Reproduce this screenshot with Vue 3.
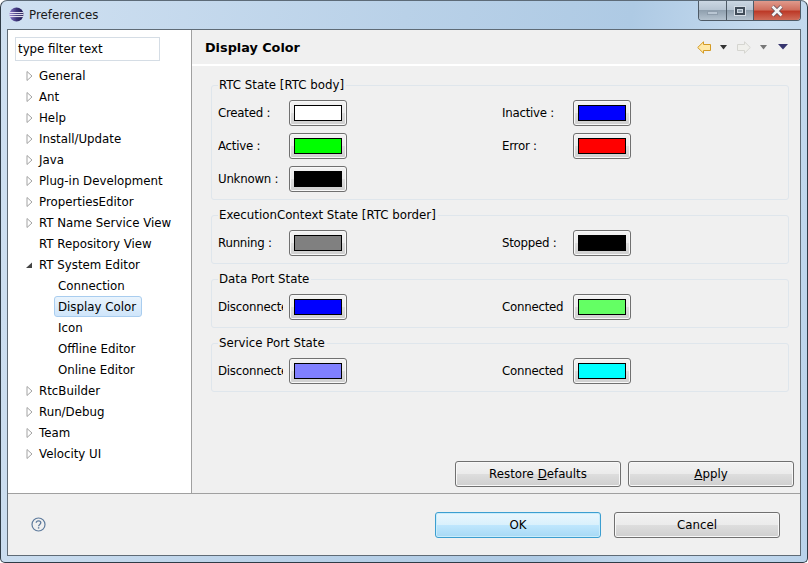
<template>
  <div class="window">
    <div class="titlebar">
      <div class="title-left">
        <svg class="logo" width="15" height="15" viewBox="0 0 15 15">
          <defs>
            <linearGradient id="eclipse" x1="0" y1="0" x2="1" y2="0">
              <stop offset="0" stop-color="#8a78c8" />
              <stop offset="0.5" stop-color="#3c3478" />
              <stop offset="1" stop-color="#1e1a50" />
            </linearGradient>
          </defs>
          <circle cx="7.5" cy="7.5" r="7" fill="url(#eclipse)" />
          <path d="M0.6 5.6h13.8M0.4 7.6h14.2M0.6 9.6h13.8" stroke="#f1eef8" stroke-width="1" />
        </svg>
        <span class="title-text">Preferences</span>
      </div>
      <div class="win-controls">
        <div class="ctl ctl-min"><span class="min-glyph"></span></div>
        <div class="ctl ctl-max"><span class="max-glyph"></span></div>
        <div class="ctl ctl-close">
          <svg width="14" height="12" viewBox="0 0 14 12">
            <path d="M2.5 1.5l9 9M11.5 1.5l-9 9" stroke="#5b4a55" stroke-width="4" fill="none" />
            <path d="M2.5 1.5l9 9M11.5 1.5l-9 9" stroke="#f4f4f4" stroke-width="2.6" fill="none" />
          </svg>
        </div>
      </div>
    </div>

    <div class="client">
      <div class="main">
        <aside class="sidebar">
          <div class="filter">type filter text</div>
          <ul class="tree">
            <li v-for="item in tree" :key="item.label" class="tree-row" :class="{ child: item.child }">
              <svg v-if="item.arrow === 'closed'" class="twisty" width="7" height="10" viewBox="0 0 7 10">
                <path d="M1 0.5L6 5L1 9.5Z" fill="#fff" stroke="#a3a3a3" />
              </svg>
              <svg v-else-if="item.arrow === 'open'" class="twisty" width="7" height="10" viewBox="0 0 7 10">
                <path d="M0 8L6 2.5V8Z" fill="#444" />
              </svg>
              <span v-else class="twisty-gap"></span>
              <span class="tree-label" :class="{ selected: item.selected }">{{ item.label }}</span>
            </li>
          </ul>
        </aside>

        <section class="content">
          <header class="page-head">
            <h1>Display Color</h1>
            <div class="nav-icons">
              <svg width="14" height="13" viewBox="0 0 14 13">
                <path d="M0.7 6.5L6.5 0.8V3.5H13.5V9.5H6.5V12.2Z" fill="#ffe9a8" stroke="#d49a24" />
              </svg>
              <svg class="drop" width="7" height="5" viewBox="0 0 7 5"><path d="M0 0H7L3.5 4.5Z" fill="#333" /></svg>
              <svg class="fwd" width="14" height="13" viewBox="0 0 14 13">
                <path d="M13.3 6.5L7.5 0.8V3.5H0.5V9.5H7.5V12.2Z" fill="#f0f0ec" stroke="#d5d5d0" />
              </svg>
              <svg class="drop" width="7" height="5" viewBox="0 0 7 5"><path d="M0 0H7L3.5 4.5Z" fill="#777" /></svg>
              <svg class="menu" width="10" height="6" viewBox="0 0 10 6"><path d="M0 0H10L5 5.5Z" fill="#36346e" /></svg>
            </div>
          </header>

          <div class="page-body">
            <fieldset v-for="group in groups" :key="group.title" class="group">
              <legend>{{ group.title }}</legend>
              <div class="color-grid">
                <div v-for="c in group.colors" :key="c.label" class="color-item">
                  <span class="color-label">{{ c.label }}</span>
                  <button class="color-btn">
                    <span class="swatch" :style="{ background: c.color }"></span>
                  </button>
                </div>
              </div>
            </fieldset>

            <div class="page-actions">
              <button class="btn">Restore <u>D</u>efaults</button>
              <button class="btn"><u>A</u>pply</button>
            </div>
          </div>
        </section>
      </div>

      <footer class="footer">
        <svg class="help" width="15" height="15" viewBox="0 0 15 15">
          <circle cx="7.5" cy="7.5" r="6.5" fill="none" stroke="#5d7a9c" stroke-width="1.2" />
          <path d="M5.2 5.8C5.3 4.4 6.3 3.8 7.5 3.8C8.8 3.8 9.8 4.6 9.8 5.8C9.8 7.3 7.6 7.5 7.6 9.2" fill="none" stroke="#5d7a9c" stroke-width="1.3" />
          <rect x="6.9" y="10.2" width="1.4" height="1.4" fill="#5d7a9c" />
        </svg>
        <div class="footer-actions">
          <button class="btn btn-ok">OK</button>
          <button class="btn">Cancel</button>
        </div>
      </footer>
    </div>
  </div>
</template>

<script setup>
const names = ['General', 'Ant', 'Help', 'Install/Update', 'Java', 'Plug-in Development', 'PropertiesEditor', 'RT Name Service View']
const tree = [
  ...names.map((label) => ({ label, arrow: 'closed' })),
  { label: 'RT Repository View' },
  { label: 'RT System Editor', arrow: 'open' },
  { label: 'Connection', child: true },
  { label: 'Display Color', child: true, selected: true },
  { label: 'Icon', child: true },
  { label: 'Offline Editor', child: true },
  { label: 'Online Editor', child: true },
  { label: 'RtcBuilder', arrow: 'closed' },
  { label: 'Run/Debug', arrow: 'closed' },
  { label: 'Team', arrow: 'closed' },
  { label: 'Velocity UI', arrow: 'closed' }
]

const groups = [
  {
    title: 'RTC State [RTC body]',
    colors: [
      { label: 'Created :', color: '#ffffff' },
      { label: 'Inactive :', color: '#0000ff' },
      { label: 'Active :', color: '#00ff00' },
      { label: 'Error :', color: '#ff0000' },
      { label: 'Unknown :', color: '#000000' }
    ]
  },
  {
    title: 'ExecutionContext State [RTC border]',
    colors: [
      { label: 'Running :', color: '#808080' },
      { label: 'Stopped :', color: '#000000' }
    ]
  },
  {
    title: 'Data Port State',
    colors: [
      { label: 'Disconnected', color: '#0000ff' },
      { label: 'Connected', color: '#64ff64' }
    ]
  },
  {
    title: 'Service Port State',
    colors: [
      { label: 'Disconnected', color: '#8080ff' },
      { label: 'Connected', color: '#00ffff' }
    ]
  }
]
</script>

<style>
html, body {
  margin: 0;
  overflow: hidden;
}
</style>

<style scoped>
.window {
  width: 808px;
  height: 563px;
  box-sizing: border-box;
  display: flex;
  flex-direction: column;
  padding: 0 6px 6px 6px;
  border: 1px solid #2f3b46;
  border-top-color: #5d6b78;
  border-radius: 7px 7px 5px 5px;
  background: linear-gradient(100deg, #cfe0f1 0%, #b9d1e8 45%, #aecae4 70%, #c6dbef 85%, #b9d2ea 100%);
  font-family: "DejaVu Sans", sans-serif;
  font-size: 11.8px;
  color: #000;
}
.titlebar {
  height: 28px;
  flex: none;
  display: flex;
  justify-content: space-between;
  align-items: flex-start;
}
.title-left {
  display: flex;
  align-items: center;
  gap: 5px;
  height: 27px;
  padding-left: 2px;
}
.title-text {
  color: #1a1a1a;
}
.win-controls {
  display: flex;
  height: 19px;
  border: 1px solid #4e5a66;
  border-top: none;
  border-radius: 0 0 4px 4px;
  overflow: hidden;
}
.ctl {
  display: flex;
  align-items: center;
  justify-content: center;
  border-left: 1px solid #4e5a66;
  background: linear-gradient(#cbd7e3 0%, #b7c5d3 45%, #8f9fae 50%, #b4c2cf 100%);
}
.ctl-min {
  width: 27px;
  border-left: none;
}
.ctl-max {
  width: 26px;
}
.ctl-close {
  width: 46px;
  background: linear-gradient(#e09a8c 0%, #d0705f 45%, #bd3a28 55%, #cf6d5a 100%);
}
.min-glyph {
  width: 9px;
  height: 2px;
  margin-top: 5px;
  background: #b9c6d3;
  border: 1px solid #8e9dac;
}
.max-glyph {
  width: 6px;
  height: 4px;
  border: 2px solid #3f4b58;
  outline: 1px solid #d5dde6;
  box-shadow: inset 0 0 0 1px #cfd8e2;
}
.client {
  flex: 1;
  min-height: 0;
  display: flex;
  flex-direction: column;
  border: 1px solid #5f6b76;
  background: #f0f0f0;
}
.main {
  height: 464px;
  flex: none;
  box-sizing: border-box;
  display: flex;
  border-bottom: 1px solid #a0a0a0;
}
.sidebar {
  width: 184px;
  flex: none;
  box-sizing: border-box;
  background: #fff;
  border-right: 1px solid #a0a0a0;
  padding: 7px 0 0 7px;
}
.filter {
  box-sizing: border-box;
  width: 145px;
  height: 24px;
  line-height: 22px;
  padding-left: 2px;
  border: 1px solid #d5dde5;
}
.tree {
  list-style: none;
  margin: 4px 0 0;
  padding: 0;
}
.tree-row {
  height: 21px;
  display: flex;
  align-items: center;
  padding-left: 11px;
}
.tree-row.child {
  padding-left: 39px;
}
.twisty {
  flex: none;
  margin-right: 2px;
}
.twisty-gap {
  width: 9px;
  flex: none;
}
.child .twisty-gap {
  width: 0;
}
.tree-label {
  box-sizing: border-box;
  height: 21px;
  line-height: 20px;
  padding: 0 3px;
  border: 1px solid transparent;
  white-space: nowrap;
}
.tree-label.selected {
  width: 88px;
  border: 1px solid #a9cdef;
  border-radius: 3px;
  background: linear-gradient(#eaf4fd, #cfe5fa);
}
.content {
  flex: 1;
  min-width: 0;
  display: flex;
  flex-direction: column;
}
.page-head {
  height: 36px;
  flex: none;
  box-sizing: border-box;
  display: flex;
  align-items: center;
  justify-content: space-between;
  padding: 0 12px 0 13px;
  background: #f0f0f0;
  border-bottom: 2px solid;
  border-image: linear-gradient(#a0a0a0 50%, #fff 50%) 1;
}
.page-head h1 {
  margin: 0;
  font-size: 12.8px;
  font-weight: 700;
}
.nav-icons {
  display: flex;
  align-items: center;
}
.drop {
  margin-left: 9px;
}
.fwd {
  margin-left: 10px;
}
.menu {
  margin-left: 11px;
}
.page-body {
  flex: 1;
  min-height: 0;
  display: flex;
  flex-direction: column;
  padding: 11px 11px 6px 19px;
}
.group {
  margin: 0 0 7px;
  padding: 0 0 7px 6px;
  min-width: 0;
  border: 1px solid #dfe6ec;
  border-radius: 3px;
}
.group legend {
  padding: 0 2px 0 1px;
  line-height: 16px;
  height: 16px;
}
.color-grid {
  display: grid;
  grid-template-columns: 284px 284px;
  row-gap: 7px;
  margin-top: 7px;
}
.color-item {
  display: flex;
  align-items: center;
}
.color-label {
  width: 65px;
  margin-right: 6px;
  overflow: hidden;
  white-space: nowrap;
  letter-spacing: -0.25px;
}
.color-btn {
  width: 58px;
  height: 26px;
  padding: 0;
  display: flex;
  align-items: center;
  justify-content: center;
  border: 1px solid #707070;
  border-radius: 3px;
  background: linear-gradient(#f2f2f2 0%, #ebebeb 50%, #dddddd 52%, #cfcfcf 100%);
  box-shadow: inset 0 0 0 1px #f8f8f8;
}
.swatch {
  box-sizing: border-box;
  width: 48px;
  height: 16px;
  border: 1px solid #000;
}
.page-actions {
  margin-top: auto;
  display: flex;
  justify-content: flex-end;
  gap: 7px;
  margin-right: -5px;
}
.btn {
  box-sizing: border-box;
  width: 166px;
  height: 26px;
  padding: 0;
  font: inherit;
  color: #000;
  border: 1px solid #707070;
  border-radius: 3px;
  background: linear-gradient(#f2f2f2 0%, #ebebeb 50%, #dddddd 52%, #cfcfcf 100%);
  box-shadow: inset 0 0 0 1px #f8f8f8;
}
.btn-ok {
  border-color: #3c9ed0;
  background: linear-gradient(#eaf6fd 0%, #d9f0fc 50%, #bee6fd 52%, #a7d9f5 100%);
  box-shadow: inset 0 0 0 1px #c9ecfb;
}
.footer {
  flex: 1;
  display: flex;
  align-items: center;
  justify-content: space-between;
  padding: 0 20px 0 23px;
}
.footer-actions {
  display: flex;
  gap: 13px;
}
</style>
